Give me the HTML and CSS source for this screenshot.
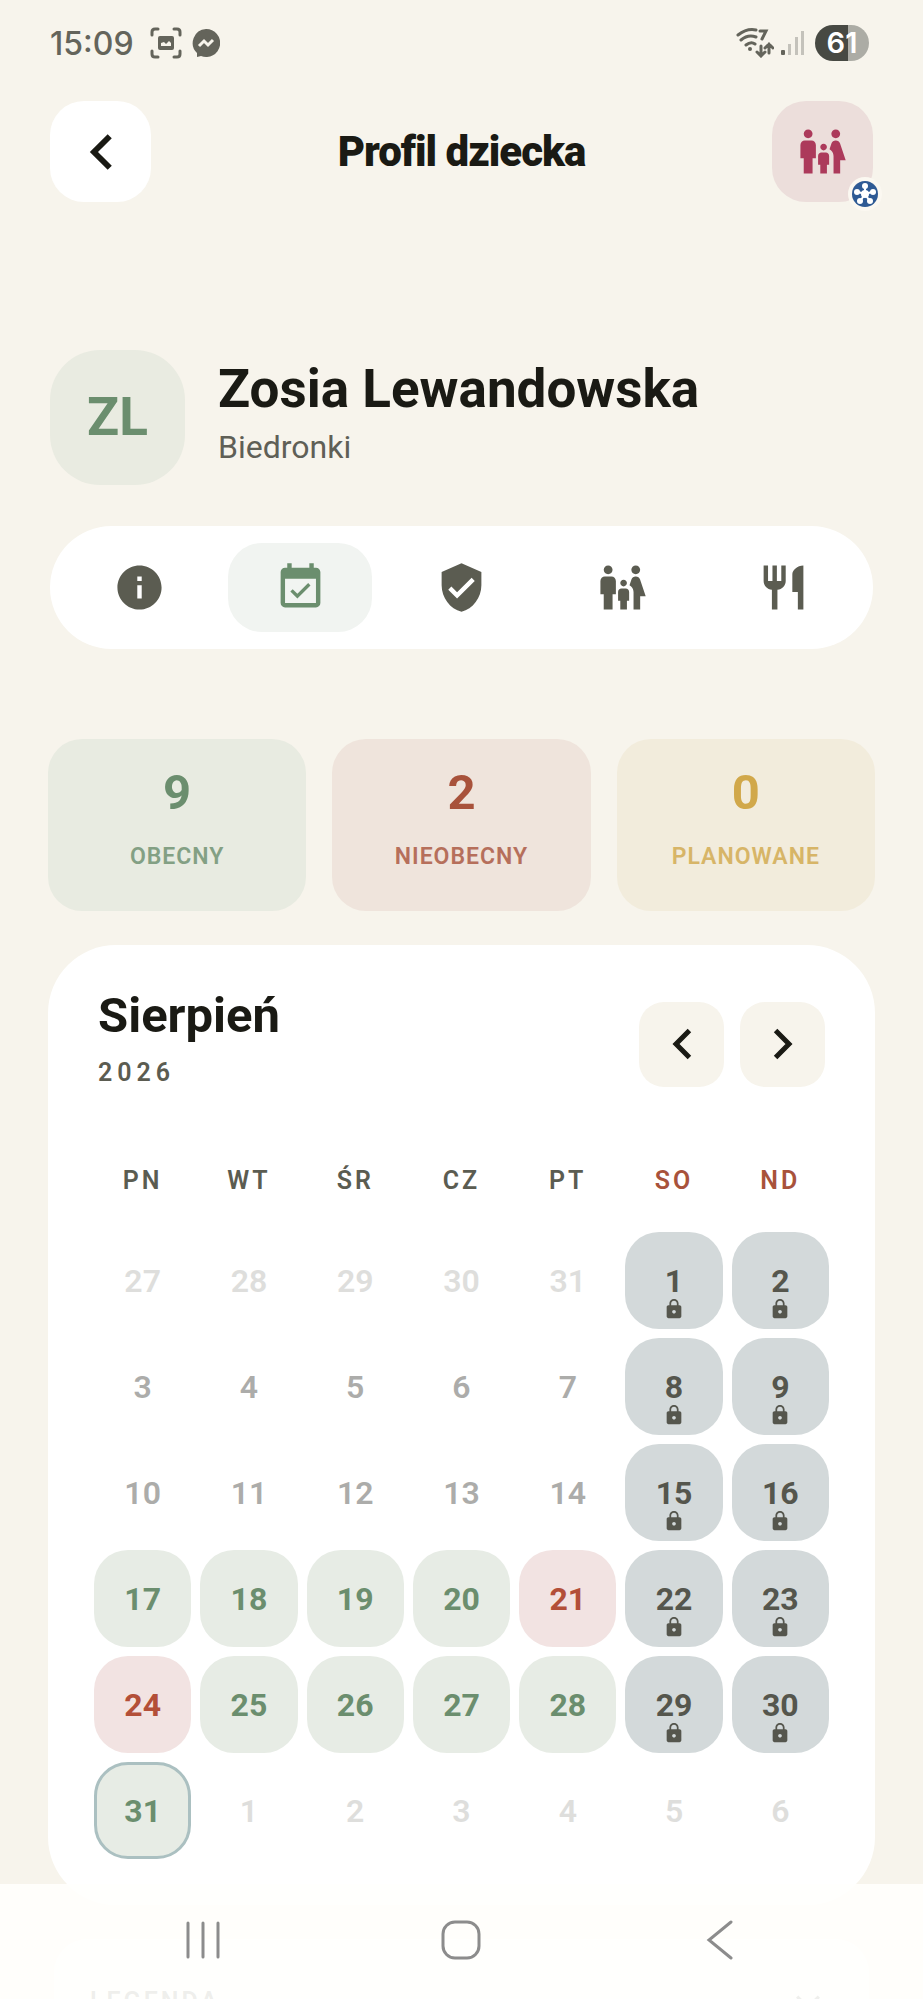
FILE: index.html
```html
<!DOCTYPE html>
<html lang="pl">
	<head>
		<meta charset="utf-8">
		<meta name="viewport" content="width=device-width, initial-scale=1">
		<title>Profil dziecka</title>
		<link rel="stylesheet" href="styles.css">
	</head>
<body>

<!-- shared icons -->
<svg class="sprite" aria-hidden="true">
	<symbol id="left" viewBox="0 0 24 24"><path d="M17.77 3.77L16 2 6 12l10 10 1.77-1.77L9.54 12z"/></symbol>
	<symbol id="right" viewBox="0 0 24 24"><path d="M6.23 20.23L8 22l10-10L8 2 6.23 3.77 14.46 12z"/></symbol>
	<symbol id="family" viewBox="0 0 24 24"><path d="M16 4c0-1.11.89-2 2-2s2 .89 2 2-.89 2-2 2-2-.89-2-2zm4 18v-6h2.5l-2.54-7.63C19.68 7.55 18.92 7 18.06 7h-.12c-.86 0-1.63.55-1.9 1.37l-.86 2.58c1.08.6 1.82 1.73 1.82 3.05v8h3zm-7.5-10.5c.83 0 1.5-.67 1.5-1.5s-.67-1.5-1.5-1.5S11 9.17 11 10s.67 1.5 1.5 1.5zM5.5 6c1.11 0 2-.89 2-2s-.89-2-2-2-2 .89-2 2 .89 2 2 2zm2 16v-7H9V9c0-1.1-.9-2-2-2H4c-1.1 0-2 .9-2 2v6h1.5v7h4zm6.5 0v-4h1v-4c0-.82-.68-1.5-1.5-1.5h-2c-.82 0-1.5.68-1.5 1.5v4h1v4h3z"/></symbol>
	<symbol id="lock" viewBox="0 0 24 24"><path d="M18 8h-1V6c0-2.76-2.24-5-5-5S7 3.24 7 6v2H6c-1.1 0-2 .9-2 2v10c0 1.1.9 2 2 2h12c1.1 0 2-.9 2-2V10c0-1.1-.9-2-2-2zm-6 9c-1.1 0-2-.9-2-2s.9-2 2-2 2 .9 2 2-.9 2-2 2zm3.1-9H8.900V6c0-1.710 1.390-3.100 3.100-3.100 1.710 0 3.100 1.390 3.100 3.100v2z"/></symbol>
</svg>

<div class="status">
	<span class="clock">15:09</span>
	<svg class="shot" viewBox="0 0 32 32"><path class="line" d="M2 8V5q0-3 3-3h3M24 2h3q3 0 3 3v3M30 24v3q0 3-3 3h-3M8 30H5q-3 0-3-3v-3"/><rect x="8" y="9" width="16" height="14" rx="2"/><path class="cut" d="M11 19v-3l3-1 2 2 3-3 2 2v3z"/></svg>
	<svg class="messenger" viewBox="0 0 28 28"><path d="M14 0a14 14 0 1 1-5 27l-4 1v-4A14 14 0 0 1 14 0z"/><path class="zig" d="M7 17l5-5 4 4 5-5"/></svg>
	<span class="grow"></span>
	<svg class="wifi" viewBox="0 0 38 30"><path class="line" d="M2 7Q11 0 20 2M5 12q7-6 15-3M10 17q5-4 9-1"/><circle cx="14" cy="21" r="2"/><path class="line" d="M24 3h6l-4 8M25 18v9M21 24l4 4 4-4M33 25v-9M29 20l4-4 4 4"/></svg>
	<svg class="signal" viewBox="0 0 24 26"><rect x="0" y="20" width="4" height="5" rx="1"/><path class="dim" d="M7 14h3v11H7zM14 7h3v18h-3zM20 1h3v24h-3z"/></svg>
	<span class="battery">61</span>
</div>

<header class="top">
	<button class="back" aria-label="Wstecz"><svg><use href="#left"/></svg></button>
	<h1>Profil dziecka</h1>
	<button class="account" aria-label="Rodzina">
		<svg><use href="#family"/></svg>
		<span class="badge"><svg viewBox="0 0 26 26"><circle class="disc" cx="13" cy="13" r="13"/><path class="spokes" d="M13 13V6M13 13l-7-2M13 13l7-2M13 13l-4 6M13 13l4 6"/><circle cx="13" cy="13" r="4"/><circle cx="13" cy="5" r="3"/><circle cx="5" cy="11" r="3"/><circle cx="21" cy="11" r="3"/><circle cx="8" cy="20" r="3"/><circle cx="18" cy="20" r="3"/></svg></span>
	</button>
</header>

<main>
	<section class="child">
		<div class="avatar">ZL</div>
		<div>
			<h2>Zosia Lewandowska</h2>
			<p>Biedronki</p>
		</div>
	</section>

	<nav class="tabs">
		<button aria-label="Informacje"><svg viewBox="0 0 24 24"><path d="M12 2C6.48 2 2 6.48 2 12s4.48 10 10 10 10-4.48 10-10S17.52 2 12 2zm1 15h-2v-6h2v6zm0-8h-2V7h2v2z"/></svg></button>
		<button class="on" aria-label="Kalendarz"><svg viewBox="0 0 24 24"><path d="M16.53 11.06L15.47 10l-4.88 4.88-2.12-2.12-1.06 1.06L10.59 17l5.94-5.94zM19 3h-1V1h-2v2H8V1H6v2H5c-1.11 0-1.99.9-1.99 2L3 19c0 1.1.89 2 2 2h14c1.1 0 2-.9 2-2V5c0-1.1-.9-2-2-2zm0 16H5V8h14v11z"/></svg></button>
		<button aria-label="Zgody"><svg viewBox="0 0 24 24"><path d="M12 1L3 5v6c0 5.55 3.84 10.74 9 12 5.16-1.26 9-6.45 9-12V5l-9-4zm-2 16l-4-4 1.41-1.41L10 14.17l6.59-6.59L18 9l-8 8z"/></svg></button>
		<button aria-label="Rodzice"><svg><use href="#family"/></svg></button>
		<button aria-label="Posiłki"><svg viewBox="0 0 24 24"><path d="M11 9H9V2H7v7H5V2H3v7c0 2.12 1.66 3.84 3.75 3.97V22h2.5v-9.03C11.34 12.84 13 11.12 13 9V2h-2v7zm5-3v8h2.5v8H21V2c-2.76 0-5 2.24-5 4z"/></svg></button>
	</nav>

	<section class="stats">
		<div class="stat green"><b>9</b><span>OBECNY</span></div>
		<div class="stat red"><b>2</b><span>NIEOBECNY</span></div>
		<div class="stat yellow"><b>0</b><span>PLANOWANE</span></div>
	</section>

	<section class="card">
		<div class="month">
			<div>
				<h3>Sierpień</h3>
				<p>2026</p>
			</div>
			<span class="grow"></span>
			<button aria-label="Poprzedni miesiąc"><svg><use href="#left"/></svg></button>
			<button aria-label="Następny miesiąc"><svg><use href="#right"/></svg></button>
		</div>

		<table>
			<thead>
				<tr><th>PN</th><th>WT</th><th>ŚR</th><th>CZ</th><th>PT</th><th class="we">SO</th><th class="we">ND</th></tr>
			</thead>
			<tbody>
				<tr>
					<td><button class="out">27</button></td>
					<td><button class="out">28</button></td>
					<td><button class="out">29</button></td>
					<td><button class="out">30</button></td>
					<td><button class="out">31</button></td>
					<td><button class="off">1<svg><use href="#lock"/></svg></button></td>
					<td><button class="off">2<svg><use href="#lock"/></svg></button></td>
				</tr>
				<tr>
					<td><button>3</button></td>
					<td><button>4</button></td>
					<td><button>5</button></td>
					<td><button>6</button></td>
					<td><button>7</button></td>
					<td><button class="off">8<svg><use href="#lock"/></svg></button></td>
					<td><button class="off">9<svg><use href="#lock"/></svg></button></td>
				</tr>
				<tr>
					<td><button>10</button></td>
					<td><button>11</button></td>
					<td><button>12</button></td>
					<td><button>13</button></td>
					<td><button>14</button></td>
					<td><button class="off">15<svg><use href="#lock"/></svg></button></td>
					<td><button class="off">16<svg><use href="#lock"/></svg></button></td>
				</tr>
				<tr>
					<td><button class="present">17</button></td>
					<td><button class="present">18</button></td>
					<td><button class="present">19</button></td>
					<td><button class="present">20</button></td>
					<td><button class="absent">21</button></td>
					<td><button class="off">22<svg><use href="#lock"/></svg></button></td>
					<td><button class="off">23<svg><use href="#lock"/></svg></button></td>
				</tr>
				<tr>
					<td><button class="absent">24</button></td>
					<td><button class="present">25</button></td>
					<td><button class="present">26</button></td>
					<td><button class="present">27</button></td>
					<td><button class="present">28</button></td>
					<td><button class="off">29<svg><use href="#lock"/></svg></button></td>
					<td><button class="off">30<svg><use href="#lock"/></svg></button></td>
				</tr>
				<tr>
					<td><button class="present today">31</button></td>
					<td><button class="out">1</button></td>
					<td><button class="out">2</button></td>
					<td><button class="out">3</button></td>
					<td><button class="out">4</button></td>
					<td><button class="out">5</button></td>
					<td><button class="out">6</button></td>
				</tr>
			</tbody>
		</table>
	</section>

	<section class="legend">
		<span>LEGENDA</span>
		<svg viewBox="0 0 24 24"><path d="M2 7l10 10L22 7"/></svg>
	</section>
</main>

<!-- android buttons, see-through over the page -->
<nav class="system">
	<button aria-label="Ostatnie"><svg viewBox="0 0 40 40"><path d="M5 3v34M20 3v34M35 3v34"/></svg></button>
	<button aria-label="Ekran główny"><svg viewBox="0 0 40 40"><rect x="2" y="2" width="36" height="36" rx="12"/></svg></button>
	<button aria-label="Cofnij"><svg viewBox="0 0 40 40"><path d="M31 2L9 20l22 18"/></svg></button>
</nav>

</body>
</html>
```
FILE: styles.css
```css
*{
	box-sizing: border-box;
}

body{
	margin: 0;
	height: 100vh;
	overflow: hidden;
	background: #f7f4ec;
	color: #1a1a14;
	font-family: Roboto, sans-serif;
}

h1, h2, h3, p{
	margin: 0;
}

button{
	border: 0;
	padding: 0;
	background: none;
	color: inherit;
	font-family: inherit;
	display: flex;
	align-items: center;
	justify-content: center;
}

svg{
	display: block;
	fill: currentColor;
}

.sprite{
	position: absolute;
	width: 0;
	height: 0;
}

.grow{
	flex: 1;
}

/* status bar */
.status{
	display: flex;
	align-items: center;
	height: 86px;
	padding: 0 54px 0 50px;
	color: #64645b;
}

.clock{
	font: 500 32px Inter, sans-serif;
	margin-right: 16px;
}

.status .line{
	fill: none;
	stroke: currentColor;
	stroke-width: 3;
	stroke-linecap: round;
}

.shot{
	width: 32px;
	height: 32px;
	margin-right: 10px;
}

.cut{
	fill: #f7f4ec;
}

.messenger{
	width: 28px;
	height: 28px;
}

.zig{
	fill: none;
	stroke: #f7f4ec;
	stroke-width: 3;
}

.wifi{
	width: 38px;
	height: 30px;
	margin-right: 7px;
}

.signal{
	width: 24px;
	height: 26px;
	margin-right: 10px;
}

.dim{
	fill: #c4c2bb;
}

.battery{
	width: 54px;
	height: 36px;
	border-radius: 18px;
	background: linear-gradient(90deg, #474943 61%, #acaca5 61%);
	color: #fff;
	font: 600 29px/36px Inter, sans-serif;
	text-align: center;
}

/* header */
.top{
	display: flex;
	align-items: center;
	justify-content: space-between;
	padding: 15px 50px 0;
}

.top button{
	width: 101px;
	height: 101px;
	border-radius: 34px;
}

.top h1{
	font-size: 42px;
	line-height: 50px;
	font-weight: 900;
	letter-spacing: -1px;
}

.back{
	background: #fff;
}

.back svg{
	width: 40px;
	height: 40px;
	stroke: currentColor;
}

.account{
	position: relative;
	background: #ecdedb;
	color: #ac3a5b;
}

.account > svg{
	width: 53px;
	height: 53px;
}

.badge{
	position: absolute;
	right: -9px;
	bottom: -9px;
	border: 4px solid #fbf8f1;
	border-radius: 50%;
	color: #fff;
}

.badge svg{
	width: 26px;
	height: 26px;
}

.disc{
	fill: #2e5a94;
}

.spokes{
	stroke: #fff;
	stroke-width: 2;
}

main{
	padding: 148px 48px 0;
}

/* child */
.child{
	display: flex;
	align-items: center;
	gap: 33px;
	margin: 0 2px;
}

.avatar{
	width: 135px;
	height: 135px;
	border-radius: 50px;
	background: #e9ebe1;
	color: #6b8e6e;
	font-size: 53px;
	line-height: 135px;
	font-weight: 700;
	text-align: center;
}

.child h2{
	font-size: 53px;
	line-height: 58px;
	font-weight: 700;
}

.child p{
	font-size: 32px;
	line-height: 58px;
	color: #5f5f56;
}

/* tabs */
.tabs{
	display: flex;
	gap: 17px;
	margin: 41px 2px 90px;
	padding: 17px;
	border-radius: 62px;
	background: #fff;
	color: #5b5c51;
}

.tabs button{
	flex: 1;
	height: 89px;
	border-radius: 34px;
}

.tabs svg{
	width: 53px;
	height: 53px;
}

.tabs .on{
	background: #f1f4f1;
	color: #6b8e6e;
}

/* counters */
.stats{
	display: flex;
	gap: 26px;
}

.stat{
	flex: 1;
	height: 172px;
	padding-top: 24px;
	border-radius: 34px;
	text-align: center;
}

.stat b{
	display: block;
	font-size: 49px;
	line-height: 60px;
	font-weight: 700;
}

.stat span{
	display: block;
	margin-top: 19px;
	font-size: 23px;
	line-height: 30px;
	font-weight: 600;
	letter-spacing: 1px;
	opacity: .8;
}

.green{
	background: #e8ebe1;
	color: #6b8e6e;
}

.red{
	background: #efe4dc;
	color: #a8523b;
}

.yellow{
	background: #f2ecdc;
	color: #d1a84a;
}

/* calendar */
.card{
	margin-top: 34px;
	padding: 37px;
	border-radius: 68px;
	background: #fff;
}

.month{
	display: flex;
	align-items: center;
	gap: 16px;
	padding: 0 13px;
}

.month h3{
	font-size: 49px;
	line-height: 68px;
	font-weight: 700;
}

.month p{
	font-size: 25px;
	line-height: 46px;
	font-weight: 600;
	letter-spacing: 5px;
	color: #5b5c51;
}

.month button{
	width: 85px;
	height: 85px;
	margin-top: 10px;
	border-radius: 25px;
	background: #f7f4ec;
}

.month svg{
	width: 34px;
	height: 34px;
	stroke: currentColor;
}

table{
	width: 100%;
	margin-top: 51px;
	table-layout: fixed;
	border-collapse: separate;
	border-spacing: 9px;
}

th{
	height: 67px;
	padding: 0 0 18px;
	font-size: 25px;
	font-weight: 600;
	letter-spacing: 3px;
	color: #5b5c51;
}

.we{
	color: #a8523b;
}

td{
	padding: 0;
}

td button{
	position: relative;
	width: 100%;
	height: 97px;
	border-radius: 34px;
	font-size: 32px;
	font-weight: 600;
	color: #acacaa;
}

td .out{
	color: #dededc;
}

td .off{
	background: #d3d9da;
	color: #55564d;
	font-weight: 700;
}

td .off svg{
	position: absolute;
	bottom: 9px;
	width: 22px;
	height: 22px;
}

td .present{
	background: #e7ece5;
	color: #6b8e6e;
	font-weight: 700;
}

td .absent{
	background: #f2e3e2;
	color: #b34f38;
	font-weight: 700;
}

td .today{
	border: 3px solid #abc0c1;
}

.legend{
	display: flex;
	justify-content: space-between;
	margin: 34px 6px 0;
	padding: 45px 48px 45px 36px;
	border-radius: 34px;
	background: #fff;
	font-size: 25px;
	line-height: 36px;
	font-weight: 600;
	letter-spacing: 3px;
	color: #5b5c51;
}

.legend svg{
	width: 26px;
	height: 36px;
	fill: none;
	stroke: currentColor;
	stroke-width: 3;
}

/* bottom system buttons */
.system{
	position: fixed;
	left: 0;
	right: 0;
	bottom: 0;
	height: 115px;
	padding: 0 74px;
	display: flex;
	background: rgba(255, 255, 253, .9);
	color: #8c8c8c;
}

.system button{
	flex: 1;
	height: 112px;
}

.system svg{
	width: 40px;
	height: 40px;
	fill: none;
	stroke: currentColor;
	stroke-width: 3;
	stroke-linecap: round;
}
```
